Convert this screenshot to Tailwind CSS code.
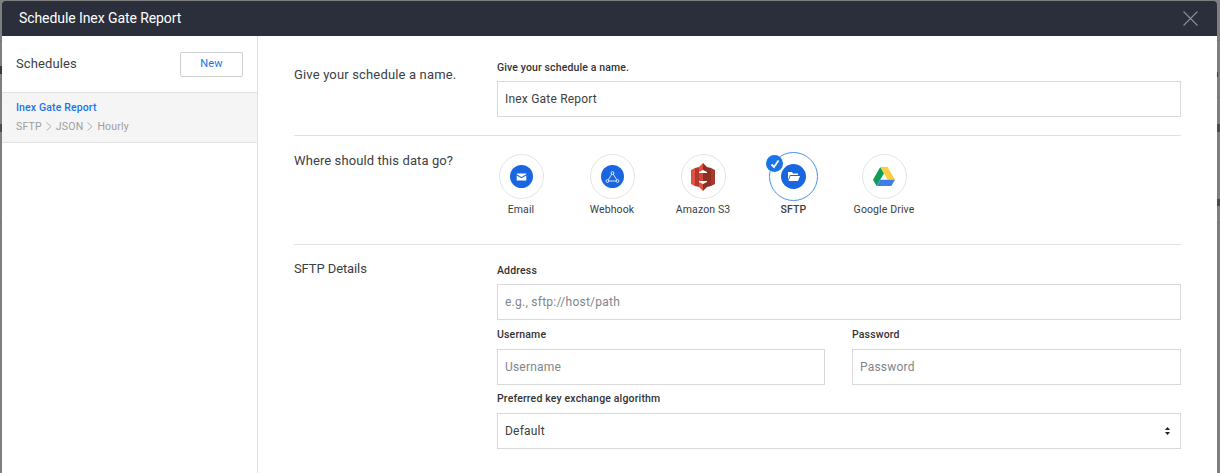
<!DOCTYPE html>
<html lang="en">
<head>
    <meta charset="UTF-8">
    <title>Schedule Inex Gate Report</title>
    <script src="https://cdn.jsdelivr.net/npm/@tailwindcss/browser@4"></script>
</head>
<body class="relative bg-[#7f7f7f] h-[473px] overflow-hidden font-['Roboto',sans-serif]">
    <!-- page behind the overlay -->
    <div class="absolute inset-x-0 top-[40px] h-px bg-[#767676]"></div>
    <div class="absolute inset-x-0 top-[97px] h-px bg-[#767676]"></div>
    <div class="absolute inset-x-0 top-[222px] h-px bg-[#767676]"></div>
    <div class="absolute left-0 top-[66px] w-[2px] h-[8px] bg-[#3a3a3a]"></div>
    <div class="absolute left-0 top-[124px] w-[2px] h-[8px] bg-[#4a4a4a]"></div>
    <div class="absolute right-0 top-[124px] w-[3px] h-[8px] bg-[#4a4a4a]"></div>
    <div class="absolute right-[2px] top-[72px] w-px h-[5px] bg-[#3a3a3a]"></div>
    <div class="absolute right-0 top-[199px] w-[3px] h-[7px] bg-[#4a4a4a]"></div>

    <div class="relative ml-[2px] mr-[3px] mt-[1px] h-[472px] bg-white rounded-t-[3px] overflow-hidden flex flex-col">
        <header class="h-[35px] shrink-0 bg-[#2a2f3b] flex items-center justify-between pl-[17px] pr-[19px] text-white">
            <h1 class="text-[14px] tracking-[-0.08px]">Schedule Inex Gate Report</h1>
            <svg class="w-[15px] h-[15px]" viewBox="0 0 15 15" fill="none" stroke="#8b8e95" stroke-width="1.1"><path d="M0.5 0.5L14.5 14.5M14.5 0.5L0.5 14.5"/></svg>
        </header>
        <div class="flex flex-1 min-h-0">
            <aside class="w-[256px] shrink-0 border-r border-[#e0e0e0]">
                <div class="h-[57px] flex items-center justify-between pl-[14px] pr-[14px] border-b border-[#e0e0e0]">
                    <span class="text-[13px] text-[#3c4043] tracking-[0.1px]">Schedules</span>
                    <button class="w-[63px] h-[25px] border border-[#cfcfcf] rounded-[2px] text-[11px] text-[#1a73e8] tracking-[0.2px]">New</button>
                </div>
                <div class="h-[50px] bg-[#f5f5f5] border-b border-[#e0e0e0] pl-[14px] pt-[8px]">
                    <div class="text-[10.5px] leading-[13px] font-medium text-[#1a73e8] tracking-[0.13px]">Inex Gate Report</div>
                    <div class="flex items-center gap-[4px] mt-[6px] text-[10.5px] leading-[13px] text-[#9e9e9e] tracking-[0.2px]">
                        <span>SFTP</span>
                        <svg class="w-[6px] h-[9px]" viewBox="0 0 6 9" fill="none" stroke="#9e9e9e" stroke-width="0.8"><path d="M0.5 0.5L5 4.5L0.5 8.5"/></svg>
                        <span>JSON</span>
                        <svg class="w-[6px] h-[9px]" viewBox="0 0 6 9" fill="none" stroke="#9e9e9e" stroke-width="0.8"><path d="M0.5 0.5L5 4.5L0.5 8.5"/></svg>
                        <span>Hourly</span>
                    </div>
                </div>
            </aside>
            <main class="flex-1 min-w-0 pl-[36px] pr-[36px]">
                <section class="h-[100px] flex border-b border-[#e0e0e0]">
                    <div class="w-[203px] shrink-0 pt-[31px] text-[13px] leading-[16px] text-[#3c4043] tracking-[0.16px]">Give your schedule a name.</div>
                    <div class="flex-1">
                        <label class="block pt-[25px] text-[10.5px] leading-[13px] font-medium text-[#333] tracking-[0.12px]">Give your schedule a name.</label>
                        <input class="block mt-[7px] w-full h-[36px] border border-[#d9d9d9] px-[7px] text-[12px] text-[#3c4043] tracking-[0.2px]" value="Inex Gate Report">
                    </div>
                </section>
                <section class="h-[109px] flex border-b border-[#e0e0e0]">
                    <div class="w-[203px] shrink-0 pt-[17px] text-[13px] leading-[16px] text-[#3c4043] tracking-[0.1px]">Where should this data go?</div>
                    <div class="flex pt-[18px] text-[10.5px] leading-[13px] text-[#3c4043] tracking-[0.12px]">
                        <div class="w-[48px] flex flex-col items-center">
                            <div class="w-[45px] h-[45px] rounded-full border border-[#e4e4e4] flex items-center justify-center">
                                <div class="w-[23px] h-[23px] rounded-full bg-[#1a66e0] flex items-center justify-center">
                                    <svg class="w-[11px] h-[8px]" viewBox="0 0 13 10"><path fill="#fff" d="M0.5 0.5h12v1L6.5 5L0.5 1.5zM0.5 3L6.5 6.5L12.5 3v6.5h-12z"/></svg>
                                </div>
                            </div>
                            <span class="mt-[4px] whitespace-nowrap">Email</span>
                        </div>
                        <div class="w-[48px] ml-[43px] flex flex-col items-center">
                            <div class="w-[45px] h-[45px] rounded-full border border-[#e4e4e4] flex items-center justify-center">
                                <div class="w-[23px] h-[23px] rounded-full bg-[#1a66e0] flex items-center justify-center">
                                    <svg class="w-[15px] h-[14px]" viewBox="0 0 15 14" fill="none" stroke="#fff" stroke-width="0.8"><path d="M7.5 3L2.5 11H12.5Z"/><circle cx="7.5" cy="3" r="1.4" fill="#1a66e0"/><circle cx="2.5" cy="11" r="1.4" fill="#1a66e0"/><circle cx="12.5" cy="11" r="1.4" fill="#1a66e0"/></svg>
                                </div>
                            </div>
                            <span class="mt-[4px] whitespace-nowrap">Webhook</span>
                        </div>
                        <div class="w-[48px] ml-[43px] flex flex-col items-center">
                            <div class="w-[45px] h-[45px] rounded-full border border-[#e4e4e4] flex items-center justify-center">
                                <svg class="w-[24px] h-[28px]" viewBox="0 0 24 28"><path fill="#e05243" d="M0 7l4-2v18l-4-2z"/><path fill="#b03a2c" d="M4 5l4-1v20l-4-1z"/><path fill="#e05243" d="M8 4l4-4v7l-4 2zM8 19l4 2v7l-4-4z"/><path fill="#8c3123" d="M12 0l4 4v5l-4-2zM12 21l4-2v5l-4 4z"/><path fill="#8c3123" d="M16 4l4 1v18l-4 1z"/><path fill="#a83a2d" d="M20 5l4 2v14l-4 2z"/><path fill="#c9483a" d="M8 10h4v8H8z"/><path fill="#8c3123" d="M12 10h4v8h-4z"/></svg>
                            </div>
                            <span class="mt-[4px] whitespace-nowrap">Amazon S3</span>
                        </div>
                        <div class="w-[48px] ml-[42px] flex flex-col items-center relative">
                            <div class="w-[49px] h-[49px] -mt-[2px] rounded-full border-[1.5px] border-[#4a90f0] flex items-center justify-center shrink-0">
                                <div class="w-[25px] h-[25px] rounded-full bg-[#1a66e0] flex items-center justify-center">
                                    <svg class="w-[13px] h-[11px]" viewBox="0 0 13 11"><path fill="#fff" d="M1 1h4l1 1.5h5V4H3L1 9zM3.5 5H13l-2 5H1.5z"/></svg>
                                </div>
                            </div>
                            <span class="mt-[2px] ml-[1px] whitespace-nowrap font-medium">SFTP</span>
                            <div class="absolute -left-[3px] top-[1px] w-[17px] h-[17px] rounded-full bg-[#1a73e8] flex items-center justify-center">
                                <svg class="w-[10px] h-[10px]" viewBox="0 0 10 10" fill="none" stroke="#fff" stroke-width="1.8"><path d="M1.5 5.5L4 8L8.5 1.5"/></svg>
                            </div>
                        </div>
                        <div class="w-[48px] ml-[43px] flex flex-col items-center">
                            <div class="w-[45px] h-[45px] rounded-full border border-[#e4e4e4] flex items-center justify-center">
                                <svg class="w-[22px] h-[19px]" viewBox="0 0 22 19"><path fill="#0f9d58" d="M7.3 0L0 12.7l3.6 6.3L11 6.3z"/><path fill="#ffcd40" d="M7.3 0h7.4L22 12.7h-7.3z"/><path fill="#3f7ee8" d="M22 12.7L18.4 19H3.6l3.7-6.3z"/></svg>
                            </div>
                            <span class="mt-[4px] whitespace-nowrap">Google Drive</span>
                        </div>
                    </div>
                </section>
                <section class="flex">
                    <div class="w-[203px] shrink-0 pt-[16px] text-[13px] leading-[16px] text-[#3c4043] tracking-[-0.1px]">SFTP Details</div>
                    <div class="flex-1 text-[10.5px] leading-[13px] font-medium text-[#333] tracking-[0.16px]">
                        <label class="block pt-[19px]">Address</label>
                        <input class="block mt-[7px] w-full h-[36px] border border-[#d9d9d9] px-[7px] text-[12px] font-normal tracking-[0.25px] placeholder:text-[#80868b]" placeholder="e.g., sftp://host/path">
                        <div class="flex gap-[27px] mt-[8px]">
                            <div class="w-[328px]">
                                <label class="block">Username</label>
                                <input class="block mt-[8px] w-full h-[36px] border border-[#d9d9d9] px-[7px] text-[12px] font-normal tracking-[0.2px] placeholder:text-[#80868b]" placeholder="Username">
                            </div>
                            <div class="flex-1">
                                <label class="block">Password</label>
                                <input class="block mt-[8px] w-full h-[36px] border border-[#d9d9d9] px-[7px] text-[12px] font-normal tracking-[0.2px] placeholder:text-[#80868b]" placeholder="Password">
                            </div>
                        </div>
                        <label class="block mt-[7px]">Preferred key exchange algorithm</label>
                        <div class="mt-[8px] h-[36px] border border-[#d9d9d9] flex items-center justify-between pr-[10px] pl-[7px] text-[12px] font-normal text-[#3c4043] tracking-[0.2px]">
                            <span>Default</span>
                            <svg class="w-[5px] h-[8px]" viewBox="0 0 5 8" fill="#222"><path d="M2.5 0L5 3H0zM2.5 8L0 5H5z"/></svg>
                        </div>
                    </div>
                </section>
            </main>
        </div>
    </div>
</body>
</html>
